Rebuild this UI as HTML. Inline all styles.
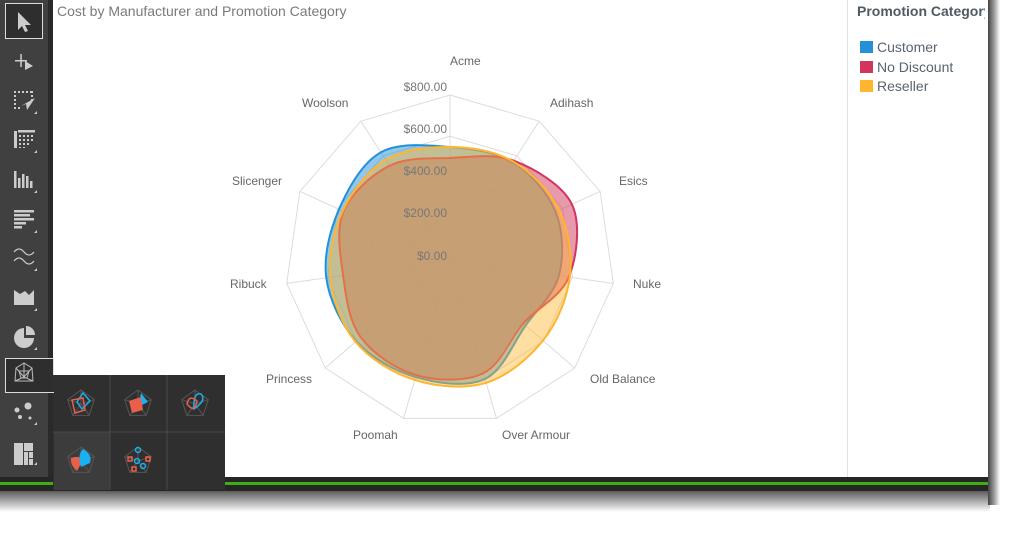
<!DOCTYPE html>
<html><head><meta charset="utf-8"><style>
body{margin:0;width:1029px;height:547px;background:#fff;position:relative;overflow:hidden;font-family:"Segoe UI","Liberation Sans",sans-serif}
.abs{position:absolute}
</style></head><body>
<div class="abs" style="left:0;top:490px;width:990px;height:22px;background:linear-gradient(#555,#aaa 50%,rgba(255,255,255,0))"></div>
<div class="abs" style="left:988px;top:0;width:12px;height:505px;background:linear-gradient(90deg,#444,#999 50%,rgba(255,255,255,0))"></div>
<div class="abs" style="left:0;top:0;width:48px;height:490px;background:#404040"></div>
<div class="abs" style="left:48px;top:0;width:5px;height:490px;background:#2a2a2a"></div>
<div class="abs" style="left:0;top:477px;width:988px;height:14px;background:#262626"></div>
<div class="abs" style="left:0;top:482px;width:988px;height:3px;background:#3fae14"></div>
<div class="abs" style="left:53px;top:0;width:935px;height:477px;background:#fff"></div>
<div class="abs" style="left:847px;top:0;width:1px;height:477px;background:#e2e2e2"></div>
<div class="abs" style="left:57px;top:3px;font-size:14px;color:#7a7a7a">Cost by Manufacturer and Promotion Category</div>
<div class="abs" style="left:857px;top:3px;font-size:14px;color:#505a64;font-weight:600;width:128px;overflow:hidden;white-space:nowrap">Promotion Category</div>
<div class="abs" style="left:860px;top:41px;width:13px;height:12px;background:#2490d8"></div>
<div class="abs" style="left:877px;top:39px;font-size:14px;color:#5a6470">Customer</div>
<div class="abs" style="left:860px;top:61px;width:13px;height:12px;background:#d2355c"></div>
<div class="abs" style="left:877px;top:59px;font-size:14px;color:#5a6470">No Discount</div>
<div class="abs" style="left:860px;top:80px;width:13px;height:12px;background:#ffb52e"></div>
<div class="abs" style="left:877px;top:78px;font-size:14px;color:#5a6470">Reseller</div>

<svg class="abs" style="left:0;top:0" width="1029" height="547" font-family="Segoe UI, Liberation Sans, sans-serif" font-size="12">
<g id="grid" stroke="#dcdcdc" fill="none" stroke-width="1"></g>
<g id="series"></g>
<g fill="#777" text-anchor="end">
<text x="447" y="91">$800.00</text><text x="447" y="133">$600.00</text><text x="447" y="175">$400.00</text><text x="447" y="217">$200.00</text><text x="447" y="260">$0.00</text>
</g>
<g fill="#666">
<text x="450" y="65">Acme</text><text x="550" y="107">Adihash</text><text x="619" y="185">Esics</text><text x="633" y="288">Nuke</text><text x="590" y="383">Old Balance</text><text x="502" y="439">Over Armour</text><text x="353" y="439">Poomah</text><text x="266" y="383">Princess</text><text x="230" y="288">Ribuck</text><text x="232" y="185">Slicenger</text><text x="302" y="107">Woolson</text>
</g>

<rect x="5.5" y="3.5" width="37" height="35" fill="#2e2e2e" stroke="#ddd"/>
<path d="M18 12 L18 30 L22 26 L25 32 L28 31 L25 25 L31 25 Z" fill="#ccc"/>
<g fill="#ccc">
<rect x="15" y="60" width="12" height="1.5"/><rect x="20.3" y="54" width="1.5" height="13"/><path d="M25 61 L33 66 L25 70Z"/>
<path d="M14 91h2v2h-2zM18 91h2v2h-2zM22 91h2v2h-2zM26 91h2v2h-2zM30 91h3v2h-3zM14 95h2v2h-2zM14 99h2v2h-2zM14 103h2v2h-2zM14 107h2v2h-2zM18 107h2v2h-2zM31 95h2v2h-2zM31 99h2v2h-2z"/><path d="M21 106 L35 98 L27 110 L26 104Z"/>
<rect x="14" y="131" width="3" height="17"/><rect x="18" y="130" width="17" height="2.5"/>
<path d="M19 135h2v2h-2zM23 135h2v2h-2zM27 135h2v2h-2zM31 135h2v2h-2zM19 139h2v2h-2zM23 139h2v2h-2zM27 139h2v2h-2zM31 139h2v2h-2zM19 143h2v2h-2zM23 143h2v2h-2zM27 143h2v2h-2zM19 147h2v1h-2zM23 147h2v1h-2z"/>
<rect x="14" y="171" width="2.5" height="17"/><rect x="18" y="178" width="2.5" height="10"/><rect x="22" y="174" width="2.5" height="14"/><rect x="26" y="176" width="2.5" height="12"/><rect x="30" y="181" width="2.5" height="7"/>
<rect x="14" y="210" width="20" height="2.5"/><rect x="14" y="214" width="16" height="2.5"/><rect x="14" y="218" width="20" height="2.5"/><rect x="14" y="222" width="12" height="2.5"/><rect x="14" y="226" width="8" height="2.5"/>
<path d="M14 290 L20 294 L25 291 L29 295 L34 290 L34 305 L14 305Z"/>
<path d="M24 328 A10 10 0 1 0 34 338 L24 338Z"/><path d="M26 326 A9 9 0 0 1 35 335 L26 335Z"/>
<circle cx="17" cy="410" r="2.5"/><circle cx="28" cy="406" r="3.5"/><circle cx="20" cy="417" r="2"/><circle cx="30" cy="418" r="1.5"/>
<path d="M14 443h9v22h-9zM24 443h9v8h-9zM24 452h4v13h-4zM29 452h4v6h-4zM29 459h4v6h-4z"/>
<path d="M37 150l-3 3h3zM37 190l-3 3h3zM37 230l-3 3h3zM37 268l-3 3h3zM37 308l-3 3h3zM37 347l-3 3h3zM37 422l-3 3h3zM37 462l-3 3h3zM37 111l-3 3h3zM38 385l-3 3h3z"/>
</g>
<path d="M14 252 q5-6 10 0 t10 0 M14 261 q5-6 10 0 t10 0" stroke="#ccc" fill="none" stroke-width="1.3"/>
<rect x="53" y="375" width="172" height="115" fill="#2f2f2f"/>
<rect x="54" y="432" width="56" height="58" fill="#3c3c3c"/>
<path d="M110 375v115M167 375v115M53 432h172" stroke="#4a4a4a"/>
<rect x="5.5" y="358.5" width="48" height="34" fill="#2e2e2e" stroke="#ddd" stroke-width="1"/>
<rect x="53" y="375" width="2" height="17" fill="#2f2f2f"/>
<path d="M15 381 L16 368 L24 363 L32 368 L33 381 Z M24 363 L24 377 M16 368 L24 377 L32 368 M15 381 L24 377 L33 381 M19 371 L29 371 L27 378 L21 378Z" stroke="#bbb" fill="none"/>
<g id="pop"></g>
</svg>
<script>
const cx=450,cy=260,R=165,N=11;
function pt(i,r){const a=i*2*Math.PI/N;return [cx+r*Math.sin(a),cy-r*Math.cos(a)];}
let g='';
[R,R*.75,R*.5,R*.25].forEach(r=>{let p=[];for(let i=0;i<N;i++)p.push(pt(i,r).join(','));g+=`<polygon points="${p.join(' ')}"/>`;});
for(let i=0;i<N;i++){const q=pt(i,R);g+=`<line x1="${cx}" y1="${cy}" x2="${q[0]}" y2="${q[1]}"/>`;}
document.getElementById('grid').innerHTML=g;
function cr(ps){let d='M'+ps[0].join(',');const n=ps.length;for(let i=0;i<n;i++){const p0=ps[(i-1+n)%n],p1=ps[i],p2=ps[(i+1)%n],p3=ps[(i+2)%n];const c1=[p1[0]+(p2[0]-p0[0])/6,p1[1]+(p2[1]-p0[1])/6],c2=[p2[0]-(p3[0]-p1[0])/6,p2[1]-(p3[1]-p1[1])/6];d+=`C${c1} ${c2} ${p2}`;}return d+'Z';}
const S=[
["#2490d8",[113,116,116,110,100,124,122,124,125,122,128],0.5],
["#d2355c",[102,118,134,120,97,118,120,118,108,117,112],0.5],
["#ffb52e",[113,117,120,121,123,128,125,125,121,118,119],0.45]];
let s='';S.forEach(([c,v,o])=>{const ps=v.map((r,i)=>pt(i,r));s+=`<path d="${cr(ps)}" fill="${c}" fill-opacity="${o}" stroke="${c}" stroke-width="2"/>`;});
// overlay tan tone for intersection look
s+=`<path d="${cr(S[1][1].map((r,i)=>pt(i,Math.min(r,S[0][1][i],S[2][1][i])-1)))}" fill="#b9a57c" fill-opacity="0.55"/>`;
document.getElementById('series').innerHTML=s;
function pent(x,y,r){let p=[];for(let i=0;i<5;i++){const a=i*2*Math.PI/5;p.push([x+r*Math.sin(a),y-r*Math.cos(a)]);}return p;}
let h='';[[81,404],[138,404],[195,404],[81,461],[138,461]].forEach(([x,y],k)=>{const p=pent(x,y,14);h+=`<polygon points="${p.join(' ')}" fill="none" stroke="#555"/>`;p.forEach(q=>h+=`<line x1="${x}" y1="${y}" x2="${q[0]}" y2="${q[1]}" stroke="#555"/>`);
if(k==0)h+=`<polygon points="${x+2},${y-11} ${x+9},${y-3} ${x+1},${y+5} ${x-4},${y-2}" fill="none" stroke="#19b1f0" stroke-width="1.5"/><polygon points="${x-9},${y-4} ${x+2},${y-6} ${x+4},${y+6} ${x-6},${y+9}" fill="none" stroke="#e8604c" stroke-width="1.5"/>`;
if(k==1)h+=`<polygon points="${x+3},${y-11} ${x+10},${y-2} ${x},${y+3}" fill="#19b1f0"/><polygon points="${x-9},${y-3} ${x+3},${y-7} ${x+5},${y+6} ${x-6},${y+9}" fill="#e8604c"/>`;
if(k==2)h+=`<path d="M${x-1} ${y+5} Q${x-2} ${y-12} ${x+6} ${y-10} Q${x+12} ${y-4} ${x-1} ${y+5}Z" fill="none" stroke="#19b1f0" stroke-width="1.5"/><path d="M${x-8} ${y} Q${x-6} ${y-10} ${x+2} ${y-3} Q${x} ${y+10} ${x-8} ${y}Z" fill="none" stroke="#e8604c" stroke-width="1.5"/>`;
if(k==3)h+=`<path d="M${x-10} ${y-3} Q${x-2} ${y-6} ${x+2} ${y-1} L${x-4} ${y+10} Q${x-11} ${y+4} ${x-10} ${y-3}Z" fill="#e8604c"/><path d="M${x+2} ${y-12} Q${x+12} ${y-6} ${x+9} ${y+2} L${x} ${y+6} Q${x-4} ${y-6} ${x+2} ${y-12}Z" fill="#19b1f0"/>`;
if(k==4)h+=`<g fill="none" stroke-width="1.5"><circle cx="${x}" cy="${y-11}" r="2.5" stroke="#19b1f0"/><circle cx="${x-1}" cy="${y}" r="2.5" stroke="#19b1f0"/><circle cx="${x+5}" cy="${y+5}" r="2.5" stroke="#19b1f0"/><rect x="${x-10}" y="${y-4}" width="4" height="4" stroke="#e8604c"/><rect x="${x+8}" y="${y-4}" width="4" height="4" stroke="#e8604c"/><rect x="${x-6}" y="${y+6}" width="4" height="4" stroke="#e8604c"/></g>`;});
document.getElementById('pop').innerHTML=h;
</script>
</body></html>
